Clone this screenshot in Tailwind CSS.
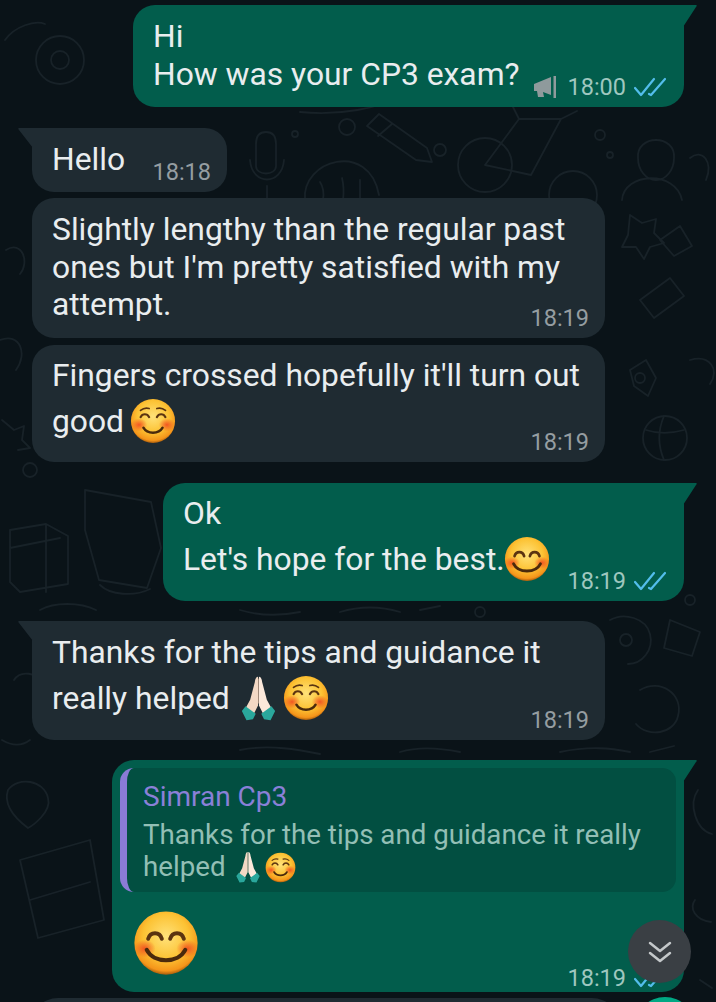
<!DOCTYPE html>
<html lang="en">
<head>
  <meta charset="UTF-8" />
  <meta name="viewport" content="width=device-width, initial-scale=1.0"/>
  <title>Chat</title>
  <script src="https://cdn.jsdelivr.net/npm/@tailwindcss/browser@4"></script>
</head>
<body class="bg-[#0a1318] font-['Roboto',sans-serif] text-[#e9edef] text-[31.8px] overflow-hidden">
  <!-- shared emoji drawings -->
  <svg class="absolute w-0 h-0" aria-hidden="true">
    <defs>
      <radialGradient id="face" cx="50%" cy="40%" r="60%">
        <stop offset="0" stop-color="#ffe27a"/>
        <stop offset="0.6" stop-color="#fcc233"/>
        <stop offset="0.9" stop-color="#f5951a"/>
        <stop offset="1" stop-color="#a85c0c"/>
      </radialGradient>
      <radialGradient id="blush">
        <stop offset="0" stop-color="#f0441f" stop-opacity="0.85"/>
        <stop offset="1" stop-color="#f0441f" stop-opacity="0"/>
      </radialGradient>
      <symbol id="relaxed" viewBox="0 0 48 48">
        <circle cx="24" cy="24" r="23" fill="url(#face)"/>
        <ellipse cx="9.5" cy="28" rx="8.500" ry="7" fill="url(#blush)"/>
        <ellipse cx="38.5" cy="28" rx="8.500" ry="7" fill="url(#blush)"/>
        <path d="M11 20c2-4 7-4 9 0M28 20c2-4 7-4 9 0" fill="none" stroke="#5b3410" stroke-width="2.200" stroke-linecap="round"/>
        <path d="M11 13c3-2.500 6-3 9-2M37 13c-3-2.500-6-3-9-2" fill="none" stroke="#5b3410" stroke-width="1.800" stroke-linecap="round"/>
        <path d="M14 31c4 7 16 7 20 0" fill="none" stroke="#4a2a0c" stroke-width="2.600" stroke-linecap="round"/>
      </symbol>
      <symbol id="smile" viewBox="0 0 48 48">
        <circle cx="24" cy="24" r="23" fill="url(#face)"/>
        <ellipse cx="8.500" cy="28" rx="8" ry="6.500" fill="url(#blush)"/>
        <ellipse cx="39.500" cy="28" rx="8" ry="6.500" fill="url(#blush)"/>
        <path d="M11 21c1.500-5.500 8.500-5.500 10 0M27 21c1.500-5.500 8.500-5.500 10 0" fill="none" stroke="#5b3410" stroke-width="2.800" stroke-linecap="round"/>
        <path d="M10 29c5 10 23 10 28 0" fill="none" stroke="#4a2a0c" stroke-width="3" stroke-linecap="round"/>
      </symbol>
      <symbol id="pray" viewBox="0 0 40 48">
        <path d="M19.500 1c-2 0-3 2-3.500 6L11 26l-5 9 9 6 4.500-9z" fill="#f3d8c4"/>
        <path d="M20.500 1c2 0 3 2 3.500 6l5 19 5 9-9 6-4.500-9z" fill="#fbe8da"/>
        <path d="M20 3v27" stroke="#c9a78f" stroke-width="0.800"/>
        <path d="M2 38l4-5 11 8-3 6-7 1zM38 38l-4-5-11 8 3 6 7 1z" fill="#2aa79c"/>
      </symbol>
    </defs>
  </svg>

  <main class="relative w-[716px] h-[1002px] overflow-hidden">
    <!-- wallpaper doodles -->
    <svg class="absolute inset-0" width="716" height="1002" fill="none" stroke="#182228" stroke-width="1.800" stroke-linecap="round" stroke-linejoin="round">
      <circle cx="60" cy="60" r="24"/><circle cx="60" cy="60" r="9"/><path d="M5 40c10-14 30-20 40-16"/>
      <path d="M266 132c-8 0-10 6-10 12v22c0 10 20 10 20 0v-22c0-6-2-12-10-12zM250 160c2 26 32 26 34 0M267 186v12"/>
      <path d="M367 126l12-12 48 34 5 14-16-2zM378 136l14-12"/><circle cx="347" cy="127" r="8"/><circle cx="295" cy="134" r="3"/>
      <path d="M305 200c-4-40 64-60 74-5M320 182c4 6 4 12 3 18M342 178c2 8 2 14 1 22M360 180l0 18"/>
      <circle cx="485" cy="165" r="27"/><path d="M485 165l34-46h42l-30 56zM519 119l-8-16M561 119l16-8M485 165l46 10"/>
      <circle cx="573" cy="195" r="24"/><circle cx="600" cy="135" r="5"/><circle cx="610" cy="155" r="3"/><circle cx="440" cy="150" r="6"/>
      <path d="M622 200c2-28 54-30 60 0M638 158c-2-24 38-24 36 0 0 12-8 22-18 22s-18-10-18-22zM690 158c12-10 24 4 16 22"/>
      <path d="M300 112c40 4 80-4 100-16"/>
      <path d="M640 300l30-22 14 18-30 22zM660 240l20-14 12 20-18 10zM690 360c20-6 30 10 20 24"/>
      <path d="M630 215l12 8 14-4-2 14 10 10-14 4-6 12-8-12-14 0 6-12z"/>
      <circle cx="665" cy="438" r="22"/><path d="M646 430c12 4 24 4 38 0M664 416c-6 14-6 30 0 44"/>
      <path d="M630 370l16-10 10 18-8 18-14-10z"/><circle cx="640" cy="378" r="5"/>
      <path d="M0 340c20-8 28 14 16 30M2 420l12 10 10-4-2 14 8 8-12 2M6 250c16-10 24 12 14 24"/>
      <path d="M10 530l36-6 22 12v48l-48 8-10-10zM46 524v68M10 548l50-10"/>
      <path d="M85 490l66 12 10 46-14 40-48-8-14-50zM100 585c10 10 34 12 50 4"/>
      <circle cx="30" cy="470" r="7"/><path d="M40 610c14-8 40-8 56 0"/>
      <path d="M240 610c20 6 40 6 60 2M340 612c20-6 40-6 60 0M420 610l20-4"/><circle cx="480" cy="612" r="5"/>
      <path d="M610 620c14-8 36-2 40 14s-8 30-22 30"/><circle cx="626" cy="640" r="6"/>
      <path d="M670 620l30 12-8 24-28-8zM640 690c20-12 44 4 38 26-4 18-30 22-42 8M650 752l24-6"/><circle cx="690" cy="600" r="5"/>
      <path d="M8 790c10-14 36-10 40 8 4 14-16 28-20 30-8-6-26-20-20-38zM20 860l70-20 14 80-66 18zM30 900l60-18"/>
      <path d="M14 680c6-10 24-8 28 4M2 740c10 6 20 6 28 0"/>
      <path d="M698 790c-10 14-2 40 14 44M695 900c-6 8 0 20 16 22M700 980l12 8"/>
      <path d="M240 750c30-6 60 0 80 4M400 752c20-6 40-4 60 0M560 752c30-6 50-4 70 0"/>
    </svg>

    <div class="relative flex flex-col px-[32px] pt-[5px]">
      <!-- 18:00 -->
      <div class="relative self-end w-[551px] rounded-[22px] rounded-tr-none bg-[#025d4c] px-[20px] pt-[12px] pb-[14px] leading-[38px]">
        <svg class="absolute -right-[13px] top-0" width="14" height="24"><path d="M0 0h13c1 0 1 1 0 2L0 22z" fill="#025d4c"/></svg>
        Hi<br>How was your CP3 exam?
        <div class="absolute right-[18px] bottom-[6px] flex items-center gap-[8px] text-[23.5px] leading-[28px] text-[#9fc7bf]">
          <svg width="24" height="24" viewBox="0 0 24 24" class="mr-[2px]"><path d="M1 9l17-7v18l-8-3 1 5H5l-1-6H1z" fill="#8f9a9c"/><rect x="20.500" y="1" width="2.500" height="22" fill="#8f9a9c"/></svg>
          <span>18:00</span>
          <svg width="32" height="20" viewBox="0 0 32 20" fill="none" stroke="#53bdeb" stroke-width="2.200" stroke-linecap="round" stroke-linejoin="round"><path d="M1 11l6 7L20 2M15 17l2 1L31 2"/></svg>
        </div>
      </div>

      <!-- 18:18 -->
      <div class="relative mt-[21px] w-[195px] rounded-[22px] rounded-tl-none bg-[#1f2b32] px-[20px] pt-[12px] pb-[14px] leading-[38px]">
        <svg class="absolute -left-[14px] top-0" width="15" height="22"><path d="M15 0H1C0 0 0 1 1 2l14 18z" fill="#1f2b32"/></svg>
        Hello
        <span class="absolute right-[16px] bottom-[6px] text-[23.5px] leading-[28px] text-[#959da1]">18:18</span>
      </div>

      <!-- 18:19 -->
      <div class="relative mt-[6px] w-[573px] rounded-[22px] bg-[#1f2b32] px-[20px] pt-[13px] pb-[14.500px] leading-[37.500px]">
        Slightly lengthy than the regular past<br>ones but I'm pretty satisfied with my<br>attempt.
        <span class="absolute right-[16px] bottom-[6px] text-[23.5px] leading-[28px] text-[#959da1]">18:19</span>
      </div>

      <div class="relative mt-[7px] w-[573px] h-[117px] rounded-[22px] bg-[#1f2b32] px-[20px] pt-[7px] leading-[46px]">
        <p>Fingers crossed hopefully it'll turn out</p>
        <p class="flex items-center">good<svg class="ml-[6px] w-[46px] h-[46px]"><use href="#relaxed"/></svg></p>
        <span class="absolute right-[16px] bottom-[6px] text-[23.5px] leading-[28px] text-[#959da1]">18:19</span>
      </div>

      <div class="relative self-end mt-[21px] w-[521px] h-[118px] rounded-[22px] rounded-tr-none bg-[#025d4c] px-[20px] pt-[7px] leading-[46px]">
        <svg class="absolute -right-[13px] top-0" width="14" height="24"><path d="M0 0h13c1 0 1 1 0 2L0 22z" fill="#025d4c"/></svg>
        <p>Ok</p>
        <p class="flex items-center">Let's hope for the best.<svg class="-ml-[1px] w-[46px] h-[46px]"><use href="#smile"/></svg></p>
        <div class="absolute right-[18px] bottom-[6px] flex items-center gap-[8px] text-[23.5px] leading-[28px] text-[#9fc7bf]">
          <span>18:19</span>
          <svg width="32" height="20" viewBox="0 0 32 20" fill="none" stroke="#53bdeb" stroke-width="2.200" stroke-linecap="round" stroke-linejoin="round"><path d="M1 11l6 7L20 2M15 17l2 1L31 2"/></svg>
        </div>
      </div>

      <div class="relative mt-[20px] w-[573px] h-[119px] rounded-[22px] rounded-tl-none bg-[#1f2b32] px-[20px] pt-[8px] leading-[46px]">
        <svg class="absolute -left-[14px] top-0" width="15" height="22"><path d="M15 0H1C0 0 0 1 1 2l14 18z" fill="#1f2b32"/></svg>
        <p>Thanks for the tips and guidance it</p>
        <p class="flex items-center">really helped<svg class="ml-[10px] w-[37px] h-[46px]"><use href="#pray"/></svg><svg class="ml-[6px] w-[46px] h-[46px]"><use href="#relaxed"/></svg></p>
        <span class="absolute right-[16px] bottom-[6px] text-[23.5px] leading-[28px] text-[#959da1]">18:19</span>
      </div>

      <!-- reply bubble -->
      <div class="relative self-end mt-[20px] w-[572px] h-[232px] rounded-[22px] rounded-tr-none bg-[#025d4c] p-[8px]">
        <svg class="absolute -right-[13px] top-0" width="14" height="24"><path d="M0 0h13c1 0 1 1 0 2L0 22z" fill="#025d4c"/></svg>
        <div class="h-[124px] overflow-hidden rounded-[14px] border-l-[7px] border-[#8a7bd6] bg-[#024f41] pl-[16px] pt-[12px]">
          <p class="text-[28px] leading-[34px] text-[#8a80d8]">Simran Cp3</p>
          <p class="mt-[5px] text-[27.7px] leading-[32px] text-[#93bfb5]">Thanks for the tips and guidance it really</p>
          <p class="flex items-center text-[27.7px] leading-[32px] text-[#93bfb5]">helped<svg class="ml-[9px] w-[26px] h-[32px]"><use href="#pray"/></svg><svg class="ml-[4px] w-[31px] h-[31px]"><use href="#relaxed"/></svg></p>
        </div>
        <svg class="mt-[18px] ml-[13px] w-[66px] h-[66px]"><use href="#smile"/></svg>
        <div class="absolute right-[18px] bottom-0 flex items-center gap-[8px] text-[23.5px] leading-[28px] text-[#9fc7bf]">
          <span>18:19</span>
          <svg width="32" height="20" viewBox="0 0 32 20" fill="none" stroke="#53bdeb" stroke-width="2.200" stroke-linecap="round" stroke-linejoin="round"><path d="M1 11l6 7L20 2M15 17l2 1L31 2"/></svg>
        </div>
      </div>
    </div>

    <!-- scroll to bottom button -->
    <button class="absolute left-[628px] top-[920px] flex h-[63px] w-[63px] items-center justify-center rounded-full bg-[#3a3f44]">
      <svg width="26" height="24" viewBox="0 0 26 24" fill="none" stroke="#c4c8ca" stroke-width="2.500" stroke-linecap="round" stroke-linejoin="round"><path d="M3 3l10 8 10-8M3 13l10 8 10-8"/></svg>
    </button>
    <!-- input bar and mic button, cut off by the bottom edge -->
    <div class="absolute left-[30px] top-[998px] h-[60px] w-[590px] rounded-[28px] bg-[#1f2b32]"></div>
    <div class="absolute left-[635px] top-[997px] h-[60px] w-[60px] rounded-full bg-[#00a884]"></div>
  </main>
</body>
</html>
